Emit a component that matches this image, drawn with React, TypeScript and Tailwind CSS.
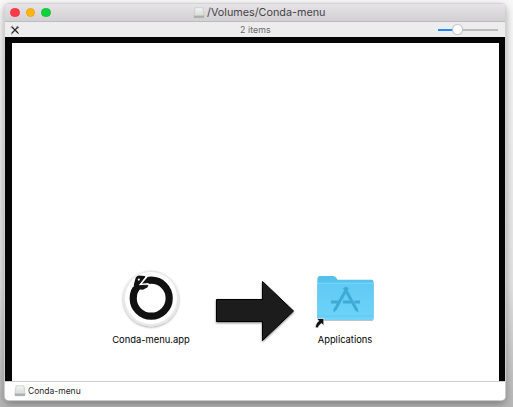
import React from "react";

function DriveIcon({ className = "" }: { className?: string }) {
  return (
    <svg className={className} width="12" height="12" viewBox="0 0 12 12">
      <defs>
        <linearGradient id="drive" x1="0" y1="0" x2="0" y2="1">
          <stop offset="0" stopColor="#f6f6f6" />
          <stop offset="1" stopColor="#cdd0d0" />
        </linearGradient>
      </defs>
      <path d="M2.200 .7h7.600l1.200 7v3.100H1V7.700z" fill="url(#drive)" stroke="#c3c5c5" strokeWidth=".7" />
      <path d="M1 8.200h10v2.600H1z" fill="#a9adad" />
      <path d="M1.300 8h9.400" stroke="#e9eaea" strokeWidth=".7" />
    </svg>
  );
}

function TitleBar() {
  return (
    <header className="flex h-[18px] shrink-0 items-center border-b border-[#bdbbbd] bg-linear-to-b from-[#e6e4e6] to-[#d2d0d3] pl-[5px]">
      <div className="flex w-[183px] gap-[6px]">
        <span className="size-[9.5px] rounded-full border border-[#f03b46] bg-[#ff3b47]" />
        <span className="size-[9.5px] rounded-full border border-[#eda514] bg-[#ffb60d]" />
        <span className="size-[9.5px] rounded-full border border-[#12c43a] bg-[#0dd33e]" />
      </div>
      <DriveIcon />
      <h1 className="ml-[2px] whitespace-nowrap text-[10.800px] leading-[16px] text-[#454345]">/Volumes/Conda-menu</h1>
    </header>
  );
}

function ToolBar() {
  return (
    <div className="flex h-[15px] shrink-0 items-center bg-[#ededed] pr-[7px] pl-[5px]">
      <svg width="10" height="10" viewBox="0 0 10 10">
        <path d="M2 2l6 6" stroke="#222" strokeWidth="1.300" />
        <path d="M8.200 1.800L1.800 8.200" stroke="#333" strokeWidth="1.300" />
        <path d="M.8 2.500l1.700-1.500M7.200 1v1.700h1.700M1 9.100l1.100-.3M8 8l1 1" stroke="#555" strokeWidth=".9" fill="none" />
      </svg>
      <span className="ml-[220px] w-[198px] whitespace-nowrap text-[8.800px] leading-[14px] tracking-[0.01em] text-[#686868]">2 items</span>
      <div className="flex w-[60px] shrink-0 items-center">
        <span className="h-[2px] w-[15px] bg-[#2488f8]" />
        <span className="size-[9px] shrink-0 rounded-full bg-white shadow-[0_0_1px_1px_#c2c2c2]" />
        <span className="h-[2px] grow bg-[#bcbcbc]" />
      </div>
    </div>
  );
}

function CondaIcon() {
  return (
    <svg width="60" height="62" viewBox="0 0 60 62">
      <defs>
        <filter id="discShadow" x="-20%" y="-20%" width="140%" height="150%">
          <feDropShadow dx="0" dy="1" stdDeviation=".8" floodOpacity=".35" />
        </filter>
      </defs>
      <circle cx="30" cy="29.500" r="28" fill="#e9e9e9" filter="url(#discShadow)" />
      <circle cx="30" cy="29" r="26" fill="#fff" />
      <circle cx="30.200" cy="29.200" r="18" fill="none" stroke="#111" strokeWidth="7.200" />
      <path d="M9 18l3-8 8-5h9l-9 10-6 3z" fill="#fff" />
      <path d="M13 15l1.600-6Q15.600 6.800 18 6.600l5.600.4q1.200.3.500 1.300l-5.300 6.900-.6 1.300 9.300-.5-1.200 2.600-4.300 2.200-6-.5-4 2z" fill="#111" />
      <path d="M26.200 7.400l-6.800 8 8.200-.7" stroke="#fff" strokeWidth="1.400" fill="none" />
      <circle cx="17.800" cy="10.600" r="1.100" fill="#fff" />
    </svg>
  );
}

function ArrowIcon() {
  return (
    <svg width="84" height="67" viewBox="0 0 84 67">
      <defs>
        <filter id="arrowShadow" x="-10%" y="-10%" width="120%" height="125%">
          <feDropShadow dx="0" dy="1" stdDeviation=".8" floodOpacity=".55" />
        </filter>
      </defs>
      <path d="M3.500 20.500h46v-18L80.500 32 49.500 61.500V42.500h-46z" fill="#1a1a1a" stroke="#030303" filter="url(#arrowShadow)" />
    </svg>
  );
}

function FolderIcon() {
  return (
    <svg width="64" height="56" viewBox="0 0 64 56">
      <defs>
        <linearGradient id="folder" x1="0" y1="0" x2="0" y2="1">
          <stop offset="0" stopColor="#5fcaf5" />
          <stop offset="1" stopColor="#6fd3f8" />
        </linearGradient>
        <filter id="folderShadow" x="-10%" y="-10%" width="120%" height="125%">
          <feDropShadow dx="0" dy=".8" stdDeviation=".6" floodOpacity=".3" />
        </filter>
      </defs>
      <g filter="url(#folderShadow)">
        <path d="M4.500 5q0-3 2.500-3h13q2 0 3 1.500l1.500 2.200h34q2 0 2 2V44q0 2-2 2H6.500q-2 0-2-2z" fill="#55c2ec" />
        <path d="M4.500 10.500q0-1.500 2-1.500h52q2 0 2 2v33q0 2-2 2h-52q-2 0-2-2z" fill="url(#folder)" />
      </g>
      <path d="M4.500 9.200h56" stroke="#8ddcf9" strokeWidth=".8" />
      <path d="M5 42h55" stroke="#5ac4eb" strokeWidth=".8" />
      <g stroke="#3eabd6" strokeWidth="3" fill="none">
        <path d="M34.500 13.500L21.800 36M31.300 13.500L43.700 36" />
        <path d="M18 28h9M30 28h8M41.500 28H47" />
      </g>
      <path d="M20.500 34.500l3 1.500-3 2.800zM42 36l2.800-1.500.6 4.300z" fill="#3eabd6" />
      <path d="M3.600 44.500h7.200v7l-2.300-2.100c-1.800 1.200-2.900 2.600-3.500 4.700l-2.700-.6c.2-2.600 1.300-4.800 3.500-6.700z" fill="#111" stroke="#fff" strokeWidth=".7" />
    </svg>
  );
}

export default function App() {
  return (
    <div className="h-[407px] w-[513px] overflow-hidden bg-linear-to-b from-[#f8f8f8] via-[#e2e2e2] via-70% to-[#b6b6b6] pt-[4px] pl-[5px] font-[Inter,'Liberation_Sans',sans-serif]">
      <main className="flex h-[396px] w-[500px] flex-col overflow-hidden rounded-[4px] bg-white shadow-[0_0_1px_1px_#d2d2d2,0_3px_9px_#0006]">
        <TitleBar />
        <ToolBar />
        <section className="flex h-[344px] shrink-0 border-x-[7px] border-t-[6px] border-r-[6px] border-[#050505] bg-white text-[9.400px] leading-[14px] text-black">
          <div className="ml-[99px] flex w-[80px] shrink-0 flex-col items-center pt-[226px]">
            <CondaIcon />
            <span className="mt-[2px] whitespace-nowrap">Conda-menu.app</span>
          </div>
          <div className="ml-[22px] shrink-0 pt-[236px]">
            <ArrowIcon />
          </div>
          <div className="ml-[16px] flex w-[64px] shrink-0 flex-col items-center pt-[231px]">
            <FolderIcon />
            <span className="mt-[3px] whitespace-nowrap">Applications</span>
          </div>
        </section>
        <footer className="flex h-[19px] shrink-0 items-center border-t border-[#cecece] bg-white pl-[9px]">
          <DriveIcon />
          <span className="ml-[2px] whitespace-nowrap text-[8.500px] leading-[14px] text-[#252525]">Conda-menu</span>
        </footer>
      </main>
    </div>
  );
}
